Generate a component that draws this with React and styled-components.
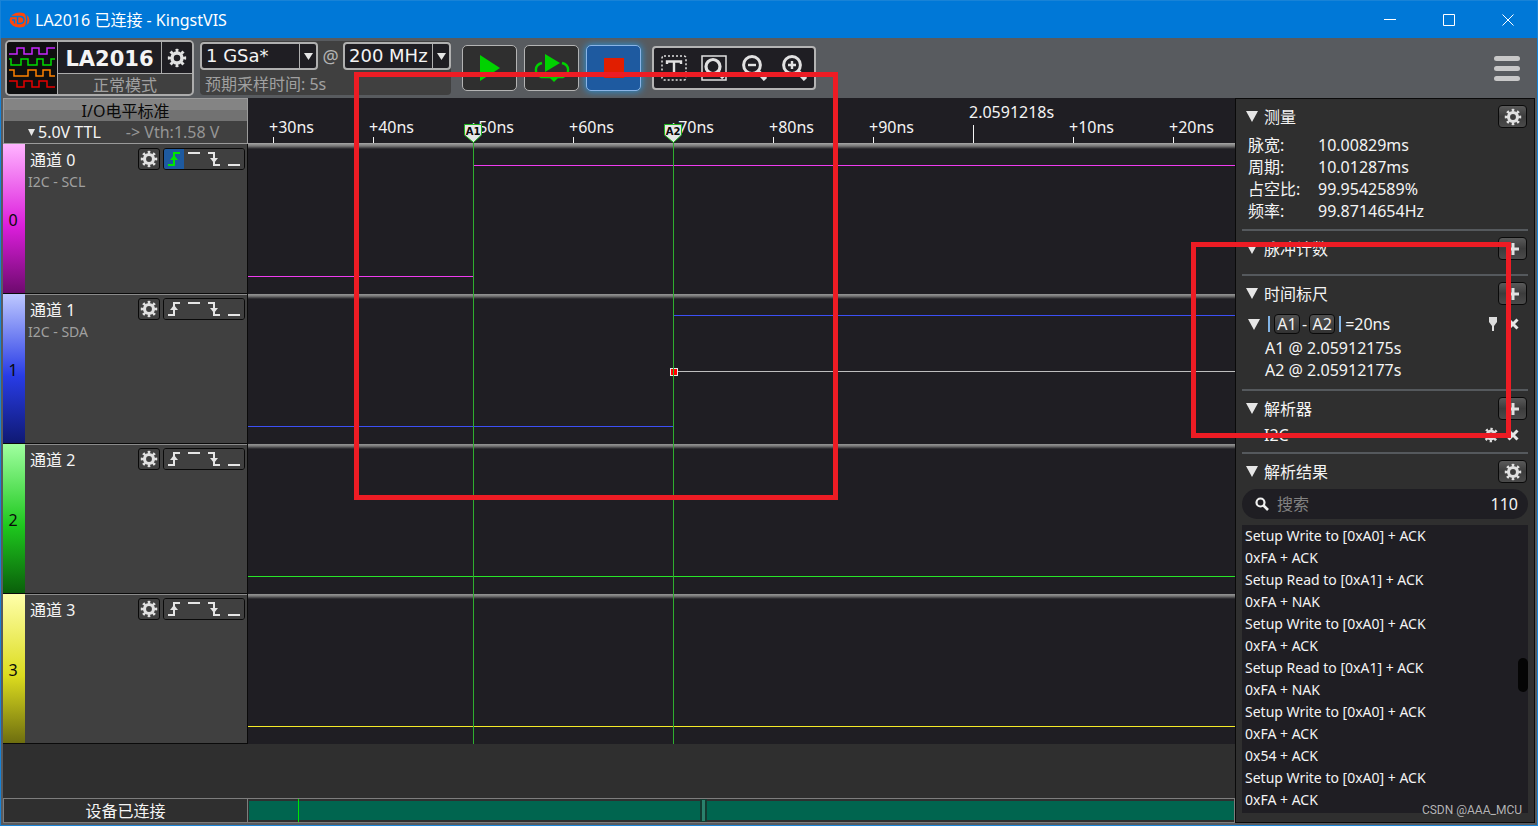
import React, { useState } from "react";
import styled, { createGlobalStyle } from "styled-components";

const GlobalStyle = createGlobalStyle`
  * { box-sizing: border-box; }
  body {
    margin: 0;
    background: #585b5f;
    color: #f4f4f4;
    font: 16px/22px "Noto Sans", "Noto Sans CJK SC", sans-serif;
  }
  button, input, select { font: inherit; color: inherit; padding: 0; margin: 0; }
  h1, h2, p, ul, dl, dd { margin: 0; padding: 0; font-weight: 400; }
  svg { display: block; flex: none; }
`;

const channels = [
  { id: 0, name: "通道 0", bus: "I2C - SCL", edge: 225, line: "#f03cf0", bar: "#ffb4ff, #dc1edc 55%, #6e0a6e", active: true },
  { id: 1, name: "通道 1", bus: "I2C - SDA", edge: 425, line: "#3c50f5", bar: "#bec8ff, #283ce6 55%, #0f1973", pulse: true },
  { id: 2, name: "通道 2", line: "#28e628", bar: "#a0ffa0, #1ec81e 55%, #0a5f0a" },
  { id: 3, name: "通道 3", line: "#f5eb28", bar: "#ffffaa, #dcdc1e 55%, #6e6e0f" },
];

const ticks = ["+30ns", "+40ns", "+50ns", "+60ns", "+70ns", "+80ns", "+90ns", "2.0591218s", "+10ns", "+20ns"];

const cursors = [
  { name: "A1", x: 225 },
  { name: "A2", x: 425 },
];

const measures = [
  ["脉宽:", "10.00829ms"],
  ["周期:", "10.01287ms"],
  ["占空比:", "99.9542589%"],
  ["频率:", "99.8714654Hz"],
];

const results = [
  "Setup Write to [0xA0] + ACK",
  "0xFA + ACK",
  "Setup Read to [0xA1] + ACK",
  "0xFA + NAK",
  "Setup Write to [0xA0] + ACK",
  "0xFA + ACK",
  "Setup Read to [0xA1] + ACK",
  "0xFA + NAK",
  "Setup Write to [0xA0] + ACK",
  "0xFA + ACK",
  "0x54 + ACK",
  "Setup Write to [0xA0] + ACK",
  "0xFA + ACK",
];

/* window frame */

const Window = styled.div`
  position: relative;
  display: flex;
  flex-direction: column;
  min-height: 100vh;
  border: 1px solid #1883d7;
  overflow: hidden;
`;

const TitleBar = styled.header`
  display: flex;
  align-items: center;
  height: 37px;
  padding-left: 8px;
  background: #0078d7;
  color: #fff;
`;

const Title = styled.h1`
  flex: 1;
  margin-left: 5px;
  font-size: 16px;
`;

const WindowButton = styled.button`
  display: flex;
  align-items: center;
  justify-content: center;
  width: 59px;
  height: 36px;
  border: 0;
  background: none;
`;

/* toolbar */

const Toolbar = styled.div`
  display: flex;
  align-items: center;
  height: 60px;
  padding: 0 17px 0 4px;
`;

const Device = styled.section`
  display: grid;
  grid-template-columns: 51px 104px 30px;
  grid-template-rows: 32px 20px;
  height: 56px;
  border: 2px solid #acacac;
  border-radius: 5px;
  background: #404040;
  overflow: hidden;
`;

const DeviceLogo = styled.div`
  grid-row: span 2;
  display: flex;
  align-items: center;
  justify-content: center;
  border-right: 1px solid #acacac;
  background: #0f0f0f;
`;

const DeviceName = styled.div`
  border-right: 1px solid #acacac;
  border-bottom: 1px solid #acacac;
  background: #1f1e23;
  font: bold 21px/34px "DejaVu Sans", sans-serif;
  text-align: center;
`;

const DeviceSettings = styled.button`
  display: flex;
  align-items: center;
  justify-content: center;
  border: 0;
  border-bottom: 1px solid #acacac;
  background: #1f1e23;
`;

const DeviceMode = styled.div`
  grid-column: span 2;
  color: #a0a0a0;
  line-height: 22px;
  text-align: center;
`;

const Sampling = styled.section`
  width: 251px;
  height: 54px;
  margin: 0 11px 0 6px;
  padding-top: 1px;
  border-radius: 4px;
  background: #404040;
`;

const SamplingRow = styled.div`
  display: flex;
  align-items: center;
  justify-content: space-between;
  color: #b4b4b4;
  font-size: 18px;
`;

const SamplingInfo = styled.p`
  padding: 3px 5px 0;
  color: #a0a0a0;
`;

const Picker = styled.label`
  position: relative;
  display: flex;
  width: ${(p) => p.$width}px;
  height: 28px;
  border: 2px solid #b0b0b0;
  border-radius: 4px;
  background: #1f1e23;
  color: #f4f4f4;
`;

const PickerSelect = styled.select`
  width: 100%;
  padding-left: 4px;
  border: 0;
  appearance: none;
  background: none;
  font: 18px/24px "DejaVu Sans", sans-serif;
  outline: none;
`;

const PickerArrow = styled.span`
  position: absolute;
  top: 0;
  right: 0;
  bottom: 0;
  display: flex;
  align-items: center;
  justify-content: center;
  width: 17px;
  border-left: 1px solid #b0b0b0;
  pointer-events: none;
`;

const RunButton = styled.button`
  display: flex;
  align-items: center;
  justify-content: center;
  width: 55px;
  height: 46px;
  margin-right: 7px;
  border: 1px solid ${(p) => (p.$active ? "#8ab4e6" : "#b4b4b4")};
  border-radius: 5px;
  background: ${(p) => (p.$active ? "#1e5aa0" : "#2f2f2f")};
  box-shadow: ${(p) => (p.$active ? "0 0 7px 1px #2d8ccd" : "none")};
`;

const ViewTools = styled.div`
  display: flex;
  height: 44px;
  margin-left: 4px;
  border: 2px solid #b4b4b4;
  border-radius: 4px;
  background: #1f1e23;
`;

const ViewButton = styled.button`
  display: flex;
  align-items: center;
  justify-content: center;
  width: 40px;
  border: 0;
  background: none;
`;

const MenuButton = styled.button`
  display: flex;
  flex-direction: column;
  gap: 5px;
  width: 26px;
  margin-left: auto;
  border: 0;
  background: none;
`;

const MenuLine = styled.span`
  height: 5px;
  border-radius: 3px;
  background: #c8c8c8;
`;

/* main area */

const Body = styled.main`
  flex: 1;
  display: flex;
  padding: 0 2px 2px;
`;

const Workspace = styled.div`
  flex: 1;
  min-width: 0;
  display: flex;
  flex-direction: column;
  background: #2f2f2f;
`;

const Analyzer = styled.div`
  flex: 1;
  display: flex;
  align-items: flex-start;
`;

const Labels = styled.div`
  flex: none;
  width: 245px;
`;

const LevelBox = styled.section`
  height: 46px;
  border: 1px solid #9b9b9b;
`;

const LevelTitle = styled.h2`
  height: 22px;
  background: linear-gradient(#848484 50%, #727272 50%);
  color: #0a0a0a;
  font-size: 16px;
  line-height: 24px;
  text-align: center;
`;

const LevelValue = styled.button`
  display: flex;
  align-items: center;
  gap: 3px;
  width: 100%;
  padding-left: 24px;
  border: 0;
  background: #404040;
`;

const Threshold = styled.span`
  margin-left: 22px;
  color: #969696;
`;

const Channel = styled.section`
  display: flex;
  height: 150px;
  border-right: 1px solid #0a0a0a;
  border-bottom: 1px solid #0a0a0a;
  background: #404040;
  box-shadow: ${(p) => (p.$first ? "none" : "inset 0 1px #8c8c8c")};
`;

const ChannelBar = styled.div`
  display: flex;
  align-items: center;
  justify-content: center;
  width: 22px;
  padding: 2px 2px 0 0;
  background: linear-gradient(${(p) => p.$colors});
  color: #0a0a0a;
`;

const ChannelBody = styled.div`
  flex: 1;
  padding: 4px 2px 0 3px;
`;

const ChannelHead = styled.div`
  display: flex;
  gap: 3px;
  height: 23px;
`;

const ChannelName = styled.h2`
  flex: 1;
  margin-left: 2px;
  font-size: 16px;
  line-height: 24px;
`;

const ChannelBus = styled.p`
  font-size: 14px;
  color: #a0a0a0;
`;

const ChannelSettings = styled.button`
  display: flex;
  align-items: center;
  justify-content: center;
  width: 22px;
  height: 22px;
  border: 1px solid #0a0a0a;
  border-radius: 3px;
  background: #404040;
`;

const Triggers = styled.div`
  display: flex;
  height: 22px;
  border: 1px solid #0a0a0a;
  border-radius: 3px;
  overflow: hidden;
`;

const TriggerButton = styled.button`
  width: 20px;
  border: 0;
  background: ${(p) => (p.$active ? "#1e5aa0" : "#404040")};
  color: ${(p) => (p.$active ? "#00e600" : "#e6e6e6")};
`;

const Plot = styled.div`
  position: relative;
  flex: 1;
  min-width: 0;
  overflow: hidden;
  background: #1f1e23;
`;

const Axis = styled.div`
  display: flex;
  height: 46px;
  padding: 4px 0 0 21px;
  border-bottom: 1px solid #a0a0a0;
`;

const Tick = styled.div`
  flex: none;
  display: flex;
  flex-direction: column;
  justify-content: ${(p) => (p.$major ? "space-between" : "flex-end")};
  width: 100px;
  line-height: 20px;

  &::after {
    content: "";
    width: 1px;
    height: ${(p) => (p.$major ? 18 : 6)}px;
    margin-left: 4px;
    background: #f4f4f4;
  }
`;

const Lane = styled.div`
  height: 150px;
  background: linear-gradient(#969696, #787878 2px, #1f1e23 5px);
`;

const CursorLine = styled.div`
  position: absolute;
  top: 26px;
  bottom: 0;
  width: 18px;
  margin-left: -9px;
  background: linear-gradient(#2fae2f, #2fae2f) 9px 0 / 1px 100% no-repeat;
`;

const StatusBar = styled.footer`
  display: flex;
  height: 25px;
`;

const Status = styled.div`
  width: 245px;
  border: 1px solid #7d7d7d;
  line-height: 24px;
  text-align: center;
`;

const Overview = styled.div`
  position: relative;
  flex: 1;
  padding: 2px 0 2px 1px;
  border: solid #7d7d7d;
  border-width: 1px 1px 1px 0;
`;

const OverviewFill = styled.div`
  height: 19px;
  background: #00654f;
`;

const TriggerMark = styled.span`
  position: absolute;
  top: 0;
  bottom: 0;
  left: 50px;
  width: 1px;
  background: #00e600;
`;

const ViewHandle = styled.span`
  position: absolute;
  top: 0;
  bottom: 0;
  left: 45.8%;
  width: 7px;
  border: 2px solid #123a30;
  border-width: 1px 2px;
  background: #2a806c;
`;

/* side panel */

const Side = styled.aside`
  display: flex;
  flex-direction: column;
  width: 300px;
  padding: 0 6px;
  border: 1px solid #0a0a0a;
  background: #2f2f2f;
`;

const Panel = styled.section`
  padding-bottom: ${(p) => p.$space || 7}px;
  border-bottom: 2px solid #55595d;
`;

const ResultPanel = styled.section`
  flex: 1;
  display: flex;
  flex-direction: column;
  padding-bottom: 9px;
`;

const PanelHead = styled.div`
  display: flex;
  align-items: center;
  gap: 6px;
  height: 35px;
  padding: 0 1px 0 4px;
`;

const PanelTitle = styled.h2`
  flex: 1;
  font-size: 16px;
  line-height: 24px;
`;

const PanelButton = styled.button`
  display: flex;
  align-items: center;
  justify-content: center;
  width: 29px;
  height: 23px;
  border: 1px solid #0a0a0a;
  border-radius: 4px;
  background: linear-gradient(#5a5a5a, #3c3c3c 50%, #4b4b4b);
`;

const Measures = styled.dl`
  display: grid;
  grid-template-columns: 70px 1fr;
  padding-left: 6px;
`;

const Ruler = styled.div`
  display: flex;
  align-items: center;
  gap: 2px;
  height: 26px;
  padding: 0 5px 0 6px;
`;

const RulerBar = styled.span`
  width: 2px;
  height: 16px;
  margin: 0 2px;
  background: #82b4e6;
`;

const RulerExpr = styled.div`
  flex: 1;
  display: flex;
  align-items: center;
  gap: 2px;
  margin-left: 4px;
`;

const RulerKey = styled.button`
  width: 26px;
  height: 20px;
  border: 1px solid #0a0a0a;
  border-radius: 4px;
  background: linear-gradient(#505050, #323232);
  line-height: 18px;
`;

const BareButton = styled.button`
  display: flex;
  padding: 0 4px;
  border: 0;
  background: none;
`;

const RulerPoint = styled.p`
  padding-left: 23px;
`;

const Decoder = styled.div`
  display: flex;
  align-items: center;
  height: 18px;
  padding: 0 5px 0 22px;
`;

const DecoderName = styled.span`
  flex: 1;
`;

const Search = styled.label`
  display: flex;
  align-items: center;
  height: 30px;
  margin-bottom: 6px;
  padding: 0 10px 0 13px;
  border-radius: 15px;
  background: #1f1e23;
`;

const SearchInput = styled.input`
  flex: 1;
  min-width: 0;
  margin-left: 8px;
  border: 0;
  outline: none;
  background: none;

  &::placeholder {
    color: #828282;
  }
`;

const Results = styled.ul`
  position: relative;
  flex: 1;
  padding-left: 3px;
  background: #1f1e23;
  font-size: 14px;
  list-style: none;
`;

const Thumb = styled.span`
  position: absolute;
  top: 133px;
  right: 0;
  width: 10px;
  height: 34px;
  border-radius: 5px;
  background: #050505;
`;

/* notes drawn over the window */

const Highlight = styled.div`
  position: absolute;
  top: ${(p) => p.$top}px;
  left: ${(p) => p.$left}px;
  width: ${(p) => p.$width}px;
  height: ${(p) => p.$height}px;
  border: 5px solid #ed1c24;
  pointer-events: none;
`;

const Watermark = styled.div`
  position: absolute;
  right: 15px;
  bottom: 4px;
  color: #b4b4b4;
  font: 12px/22px Roboto, sans-serif;
`;

const Gear = ({ size = 18 }) => (
  <svg width={size} height={size} viewBox="0 0 24 24" fill="none" stroke="#e1e1e1">
    <circle cx="12" cy="12" r="6" strokeWidth="4.2" />
    <circle cx="12" cy="12" r="9" strokeWidth="4" pathLength="16" strokeDasharray="0.95 1.05" strokeDashoffset="0.475" />
  </svg>
);

const Caret = ({ width = 12, height = 11 }) => (
  <svg width={width} height={height} viewBox="0 0 12 11" preserveAspectRatio="none" fill="#e6e6e6">
    <path d="M0 0H12L6 11Z" />
  </svg>
);

const Plus = () => (
  <svg width="12" height="12" viewBox="0 0 12 12" stroke="#e1e1e1" strokeWidth="3">
    <path d="M6 0V12M0 6H12" />
  </svg>
);

const Cross = () => (
  <svg width="12" height="12" viewBox="0 0 12 12" stroke="#e6e6e6" strokeWidth="3">
    <path d="M1.5 1.5L10.5 10.5M10.5 1.5L1.5 10.5" />
  </svg>
);

const Pin = () => (
  <svg width="8" height="14" viewBox="0 0 8 14" fill="#dcdcdc">
    <path d="M0 0H8V5L5 9V14H3V9L0 5Z" />
  </svg>
);

const AppLogo = () => (
  <svg width="21" height="16" viewBox="0 0 21 16" fill="none">
    <ellipse cx="10.5" cy="8" rx="10" ry="7.5" fill="#ff460a" />
    <path d="M1 4.5H12Q15 5 15 8T12 11.5H8.5V4.5M3 8H5.5V11.5" stroke="#0078d7" strokeWidth="1.4" />
    <path d="M16 0Q19.5 8 16 16" stroke="#0078d7" strokeWidth="1.3" />
  </svg>
);

const Pulses = () => (
  <svg width="46" height="44" viewBox="0 0 46 44" fill="none" strokeWidth="1.5">
    <path stroke="#c828ff" d="M0 8H8V2H15V8H23V2H30V8H38V2H46" />
    <path stroke="#00dc00" d="M0 13H2V19H12V13H19V19H28V13H34V19H42V13H46" />
    <path stroke="#ff8200" d="M0 24H5V30H19V24H27V30H34V24H41V30H46" />
    <path stroke="#e60000" d="M0 35H8V41H15V35H23V41H30V35H38V41H46" />
  </svg>
);

const triggers = [
  { name: "上升沿", step: "M4 16H10V4H16", head: "M6 11L10 6L14 11Z" },
  { name: "高电平", step: "M4 4H16" },
  { name: "下降沿", step: "M4 4H10V16H16", head: "M6 9L10 14L14 9Z" },
  { name: "低电平", step: "M4 16H16" },
];

function Trigger({ trigger, active, onClick }) {
  return (
    <TriggerButton $active={active} aria-label={trigger.name} onClick={onClick}>
      <svg width="20" height="20" viewBox="0 0 20 20">
        <path d={trigger.step} fill="none" stroke="currentColor" strokeWidth="2" />
        {trigger.head && <path d={trigger.head} fill="currentColor" />}
      </svg>
    </TriggerButton>
  );
}

function ChannelLabel({ channel }) {
  const [selected, setSelected] = useState(channel.active ? "上升沿" : "");
  return (
    <Channel $first={channel.id === 0}>
      <ChannelBar $colors={channel.bar}>{channel.id}</ChannelBar>
      <ChannelBody>
        <ChannelHead>
          <ChannelName>{channel.name}</ChannelName>
          <ChannelSettings aria-label="通道设置"><Gear /></ChannelSettings>
          <Triggers>
            {triggers.map((t) => (
              <Trigger key={t.name} trigger={t} active={selected === t.name} onClick={() => setSelected(t.name)} />
            ))}
          </Triggers>
        </ChannelHead>
        <ChannelBus>{channel.bus}</ChannelBus>
      </ChannelBody>
    </Channel>
  );
}

function Wave({ channel }) {
  const { edge, line, pulse } = channel;
  return (
    <Lane>
      <svg width="100%" height="150" stroke={line} shapeRendering="crispEdges">
        <line x1="0" y1="132.5" x2={edge || "100%"} y2="132.5" />
        {edge && <line x1={edge + 0.5} y1="21" x2={edge + 0.5} y2="133" />}
        {edge && <line x1={edge} y1="21.5" x2="100%" y2="21.5" />}
        {pulse && <line x1={edge} y1="77.5" x2="100%" y2="77.5" stroke="#bebebe" />}
        {pulse && <rect x={edge - 2.5} y="74.5" width="7" height="7" fill="#ff0000" stroke="#e6e6e6" />}
      </svg>
    </Lane>
  );
}

function Flag({ name }) {
  return (
    <svg width="18" height="20" viewBox="0 0 18 20">
      <path d="M0.5 0.5H17.5V11L9.5 18.5L0.5 11Z" fill="#e6e6e6" stroke="#1eb41e" />
      <text x="9" y="11" textAnchor="middle" fontFamily="DejaVu Sans" fontWeight="bold" fontSize="10" fill="#0a0a0a">{name}</text>
    </svg>
  );
}

function Section({ title, action, label }) {
  return (
    <PanelHead>
      <Caret />
      <PanelTitle>{title}</PanelTitle>
      <PanelButton aria-label={label}>{action}</PanelButton>
    </PanelHead>
  );
}

function TopTools() {
  return (
    <Toolbar>
      <Device>
        <DeviceLogo><Pulses /></DeviceLogo>
        <DeviceName>LA2016</DeviceName>
        <DeviceSettings aria-label="设备设置"><Gear size={20} /></DeviceSettings>
        <DeviceMode>正常模式</DeviceMode>
      </Device>
      <Sampling>
        <SamplingRow>
          <Picker $width={118}>
            <PickerSelect aria-label="采样深度"><option>1 GSa*</option></PickerSelect>
            <PickerArrow><Caret width={9} height={7} /></PickerArrow>
          </Picker>
          @
          <Picker $width={108}>
            <PickerSelect aria-label="采样率"><option>200 MHz</option></PickerSelect>
            <PickerArrow><Caret width={9} height={7} /></PickerArrow>
          </Picker>
        </SamplingRow>
        <SamplingInfo>预期采样时间: 5s</SamplingInfo>
      </Sampling>
      <RunButton aria-label="开始">
        <svg width="22" height="26" viewBox="0 0 22 26" fill="#00d200"><path d="M1 0L21 13L1 26Z" /></svg>
      </RunButton>
      <RunButton aria-label="循环采样">
        <svg width="36" height="30" viewBox="0 0 36 30">
          <path d="M11 1L26 10L11 19Z" fill="#00d200" />
          <path d="M8 10C0 12 0 21 7 24H29C36 21 36 12 28 10" fill="none" stroke="#00d200" strokeWidth="2.4" />
          <path d="M14 23H26L20 29Z" fill="#00d200" />
        </svg>
      </RunButton>
      <RunButton $active aria-label="停止">
        <svg width="20" height="20" viewBox="0 0 20 20"><path d="M0 0H20V20H0Z" fill="#e11e00" /></svg>
      </RunButton>
      <ViewTools>
        <ViewButton aria-label="标尺">
          <svg width="26" height="26" viewBox="0 0 26 26" fill="none" stroke="#e1e1e1">
            <rect x="1" y="1" width="24" height="24" rx="2" strokeWidth="1.5" strokeDasharray="2 2" />
            <path d="M6 9V6.5H20V9M13 6.5V19" strokeWidth="2.4" />
          </svg>
        </ViewButton>
        <ViewButton aria-label="全部显示">
          <svg width="26" height="26" viewBox="0 0 26 26" fill="none" stroke="#e1e1e1">
            <rect x="1" y="1" width="24" height="24" strokeWidth="1.5" />
            <circle cx="12" cy="11.5" r="7" strokeWidth="3.2" />
            <path d="M17 17L22.5 23" strokeWidth="4" />
          </svg>
        </ViewButton>
        {["M7 10H15", "M7 10H15M11 6V14"].map((d, i) => (
          <ViewButton key={d} aria-label={i ? "放大" : "缩小"}>
            <svg width="26" height="26" viewBox="0 0 26 26" fill="none" stroke="#e1e1e1">
              <circle cx="11" cy="10" r="8.4" strokeWidth="3" />
              <path d="M16.5 16L24.5 24.5" strokeWidth="4.6" />
              <path d={d} strokeWidth="2.4" />
            </svg>
          </ViewButton>
        ))}
      </ViewTools>
      <MenuButton aria-label="菜单"><MenuLine /><MenuLine /><MenuLine /></MenuButton>
    </Toolbar>
  );
}

function SidePanel() {
  const [query, setQuery] = useState("");
  return (
    <Side>
      <Panel>
        <Section title="测量" label="测量设置" action={<Gear />} />
        <Measures>
          {measures.map(([name, value]) => (
            <React.Fragment key={name}><dt>{name}</dt><dd>{value}</dd></React.Fragment>
          ))}
        </Measures>
      </Panel>
      <Panel $space={8}>
        <Section title="脉冲计数" label="添加" action={<Plus />} />
      </Panel>
      <Panel $space={8}>
        <Section title="时间标尺" label="添加" action={<Plus />} />
        <Ruler>
          <Caret />
          <RulerExpr>
            <RulerBar />
            <RulerKey>A1</RulerKey>-<RulerKey>A2</RulerKey>
            <RulerBar />
            <span>=20ns</span>
          </RulerExpr>
          <BareButton aria-label="固定"><Pin /></BareButton>
          <BareButton aria-label="删除"><Cross /></BareButton>
        </Ruler>
        <RulerPoint>A1 @ 2.05912175s</RulerPoint>
        <RulerPoint>A2 @ 2.05912177s</RulerPoint>
      </Panel>
      <Panel $space={8}>
        <Section title="解析器" label="添加" action={<Plus />} />
        <Decoder>
          <DecoderName>I2C</DecoderName>
          <BareButton aria-label="解析器设置"><Gear size={16} /></BareButton>
          <BareButton aria-label="删除"><Cross /></BareButton>
        </Decoder>
      </Panel>
      <ResultPanel>
        <Section title="解析结果" label="结果设置" action={<Gear />} />
        <Search>
          <svg width="14" height="14" viewBox="0 0 14 14" fill="none" stroke="#f0f0f0">
            <circle cx="5.5" cy="5.5" r="4" strokeWidth="2.2" />
            <path d="M8.5 8.5L13 13" strokeWidth="2.6" />
          </svg>
          <SearchInput aria-label="搜索" placeholder="搜索" value={query} onChange={(e) => setQuery(e.target.value)} />
          <span>110</span>
        </Search>
        <Results>
          {results.map((r, i) => <li key={i}>{r}</li>)}
          <Thumb />
        </Results>
      </ResultPanel>
    </Side>
  );
}

function App() {
  return (
    <Window>
      <GlobalStyle />
      <TitleBar>
        <AppLogo />
        <Title>LA2016 已连接 - KingstVIS</Title>
        {["M0 5.5H12", "M0.5 0.5H11.5V11.5H0.5Z", "M0.5 0.5L11.5 11.5M11.5 0.5L0.5 11.5"].map((d, i) => (
          <WindowButton key={d} aria-label={["最小化", "最大化", "关闭"][i]}>
            <svg width="12" height="12" viewBox="0 0 12 12" fill="none" stroke="#fff"><path d={d} /></svg>
          </WindowButton>
        ))}
      </TitleBar>
      <TopTools />
      <Body>
        <Workspace>
          <Analyzer>
            <Labels>
              <LevelBox>
                <LevelTitle>I/O电平标准</LevelTitle>
                <LevelValue>
                  <Caret width={7} height={7} />
                  5.0V TTL
                  <Threshold>-&gt; Vth:1.58 V</Threshold>
                </LevelValue>
              </LevelBox>
              {channels.map((c) => <ChannelLabel key={c.id} channel={c} />)}
            </Labels>
            <Plot>
              <Axis>
                {ticks.map((t) => <Tick key={t} $major={!t.startsWith("+")}>{t}</Tick>)}
              </Axis>
              {channels.map((c) => <Wave key={c.id} channel={c} />)}
              {cursors.map((c) => (
                <CursorLine key={c.name} style={{ left: c.x }}><Flag name={c.name} /></CursorLine>
              ))}
            </Plot>
          </Analyzer>
          <StatusBar>
            <Status>设备已连接</Status>
            <Overview>
              <OverviewFill />
              <TriggerMark />
              <ViewHandle />
            </Overview>
          </StatusBar>
        </Workspace>
        <SidePanel />
      </Body>
      <Highlight $top={71} $left={353} $width={484} $height={428} />
      <Highlight $top={241} $left={1190} $width={320} $height={196} />
      <Watermark>CSDN @AAA_MCU</Watermark>
    </Window>
  );
}

export default App;
